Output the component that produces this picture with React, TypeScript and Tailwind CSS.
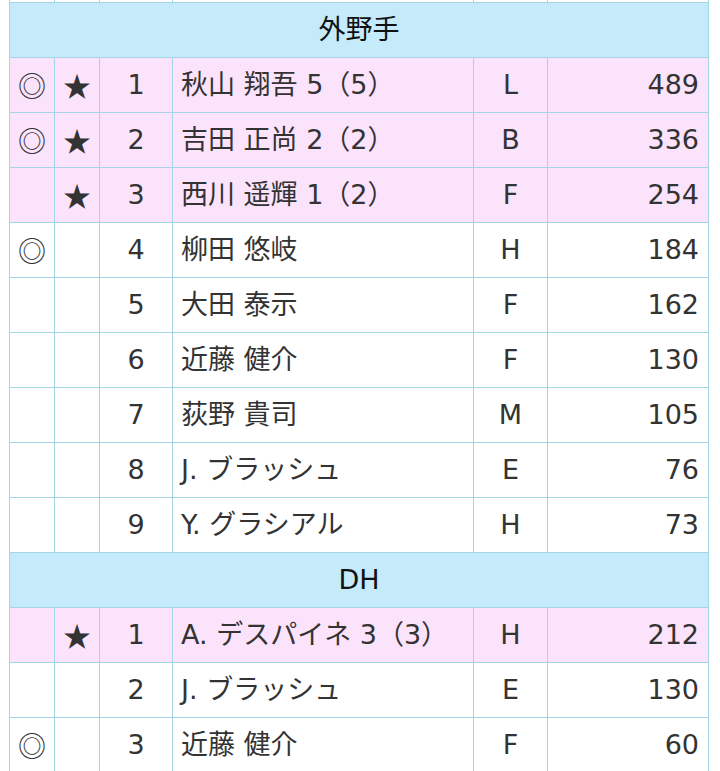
import React from 'react';

type Row = { a: string; s: string; n: string; name: string; t: string; v: string };

const outfield: Row[] = [
  { a: '◎', s: '★', n: '1', name: '秋山 翔吾 5（5）', t: 'L', v: '489' },
  { a: '◎', s: '★', n: '2', name: '吉田 正尚 2（2）', t: 'B', v: '336' },
  { a: '', s: '★', n: '3', name: '西川 遥輝 1（2）', t: 'F', v: '254' },
  { a: '◎', s: '', n: '4', name: '柳田 悠岐', t: 'H', v: '184' },
  { a: '', s: '', n: '5', name: '大田 泰示', t: 'F', v: '162' },
  { a: '', s: '', n: '6', name: '近藤 健介', t: 'F', v: '130' },
  { a: '', s: '', n: '7', name: '荻野 貴司', t: 'M', v: '105' },
  { a: '', s: '', n: '8', name: 'J. ブラッシュ', t: 'E', v: '76' },
  { a: '', s: '', n: '9', name: 'Y. グラシアル', t: 'H', v: '73' },
];

const dh: Row[] = [
  { a: '', s: '★', n: '1', name: 'A. デスパイネ 3（3）', t: 'H', v: '212' },
  { a: '', s: '', n: '2', name: 'J. ブラッシュ', t: 'E', v: '130' },
  { a: '◎', s: '', n: '3', name: '近藤 健介', t: 'F', v: '60' },
];

const td = 'border border-[#a3d5e6] h-[55px] p-0 align-middle';
const cjk = { fontFamily: '"Noto Sans CJK JP", sans-serif' };

function Section({ title, rows }: { title: string; rows: Row[] }) {
  return (
    <>
      <tr className="bg-[#c5ebfa]">
        <td colSpan={6} className={`${td} text-center text-[#111]`}>
          {title}
        </td>
      </tr>
      {rows.map((r, i) => {
        const pink = r.s === '★';
        return (
          <tr key={i} className={pink ? 'bg-[#fce3fc]' : 'bg-white'}>
            <td className={`${td} text-center text-[28px]`} style={cjk}>{r.a}</td>
            <td className={`${td} text-center text-[28px]`} style={cjk}>{r.s}</td>
            <td className={`${td} text-center`}>{r.n}</td>
            <td className={`${td} pl-[8px] whitespace-nowrap`}>{r.name}</td>
            <td className={`${td} text-center`}>{r.t}</td>
            <td className={`${td} text-right pr-[9px]`}>{r.v}</td>
          </tr>
        );
      })}
    </>
  );
}

export default function App() {
  return (
    <div className="w-[720px] h-[771px] overflow-hidden bg-white">
      <table
        className="ml-[9px] w-[699px] table-fixed border-collapse text-[27px] leading-none text-[#333]"
        style={{ fontFamily: '"DejaVu Sans", "Noto Sans CJK JP", sans-serif' }}
      >
        <colgroup>
          <col className="w-[45px]" />
          <col className="w-[45px]" />
          <col className="w-[73px]" />
          <col className="w-[301px]" />
          <col className="w-[74px]" />
          <col className="w-[161px]" />
        </colgroup>
        <tbody>
          <tr className="bg-white">
            {[0, 1, 2, 3, 4, 5].map((k) => (
              <td key={k} className="border border-t-0 border-[#a3d5e6] h-[2px] p-0" />
            ))}
          </tr>
          <Section title="外野手" rows={outfield} />
          <Section title="DH" rows={dh} />
        </tbody>
      </table>
    </div>
  );
}
